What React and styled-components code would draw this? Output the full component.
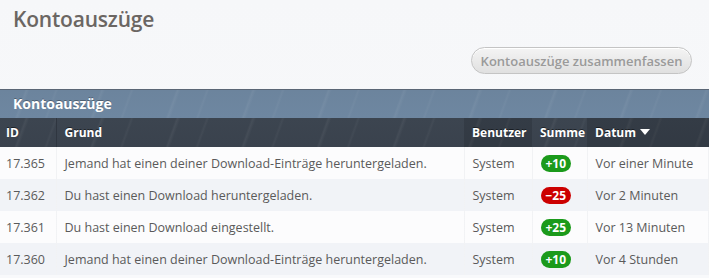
import React from "react";
import styled, { createGlobalStyle } from "styled-components";

const Global = createGlobalStyle`
  html, body { margin: 0; padding: 0; background: #f7f8fa; }
  body { font-family: "Open Sans", "DejaVu Sans", sans-serif; }
`;

const Page = styled.div`
  width: 709px;
  height: 278px;
  overflow: hidden;
  background: linear-gradient(180deg, #f6f7f9 0%, #f8f9fb 100%);
`;

const Title = styled.h1`
  margin: 0;
  padding: 5px 0 0 13px;
  height: 40px;
  box-sizing: border-box;
  font-size: 21px;
  font-weight: 600;
  color: #6b6663;
  letter-spacing: -0.2px;
`;

const ActionBar = styled.div`
  display: flex;
  justify-content: flex-end;
  padding: 7px 17px 0 0;
  height: 49px;
  box-sizing: border-box;
`;

const Button = styled.button`
  height: 27px;
  width: 221px;
  border: 1px solid #c4c4c4;
  border-radius: 14px;
  background: linear-gradient(180deg, #f4f4f4 0%, #e8e8e8 60%, #e0e0e0 100%);
  box-shadow: inset 0 1px 0 #fff;
  color: #9a9a9a;
  font-family: inherit;
  font-size: 13px;
  font-weight: 600;
  padding: 0;
`;

const Streaks = `
  repeating-linear-gradient(
    110deg,
    rgba(255,255,255,0) 0px,
    rgba(255,255,255,0) 23px,
    rgba(255,255,255,0.05) 25px,
    rgba(255,255,255,0) 28px,
    rgba(255,255,255,0) 51px,
    rgba(255,255,255,0.035) 53px,
    rgba(255,255,255,0) 55px,
    rgba(255,255,255,0) 71px
  )
`;

const Caption = styled.div`
  height: 29px;
  box-sizing: border-box;
  padding: 4px 0 0 13px;
  border-top: 1px solid #5a6675;
  background: ${Streaks}, linear-gradient(180deg, #6c849d 0%, #6e87a1 100%);
  color: #fff;
  font-size: 14px;
  font-weight: 700;
  text-shadow: 0 -1px 0 rgba(0,0,0,0.3);
`;

const Table = styled.table`
  width: 100%;
  border-collapse: collapse;
  table-layout: fixed;
  font-size: 12.5px;
`;

const Th = styled.th`
  height: 29px;
  padding: 0 0 0 ${p => p.$pad || 8}px;
  text-align: left;
  color: #fff;
  font-weight: 700;
  font-size: 12px;
  white-space: nowrap;
  text-shadow: 0 -1px 0 rgba(0,0,0,0.5);
  background: ${p => p.$dark ? "rgba(0,0,0,0.12)" : "transparent"};
  border-right: ${p => p.$divider ? "1px solid #2f3640" : "0"};
`;

const HeadRow = styled.tr`
  background: ${Streaks}, linear-gradient(180deg, #3c4550 0%, #3a424d 100%);
`;

const Row = styled.tr`
  background: ${p => (p.$alt ? "#f1f3f7" : "#fcfcfd")};
`;

const Td = styled.td`
  height: 32px;
  padding: 0 0 0 ${p => p.$pad || 8}px;
  color: #5a5a5a;
  white-space: nowrap;
  overflow: hidden;
  border-right: 1px solid rgba(0,0,0,0.025);
`;

const Badge = styled.span`
  display: inline-block;
  min-width: 30px;
  height: 17px;
  line-height: 17px;
  box-sizing: border-box;
  padding: 0 5px;
  border-radius: 9px;
  text-align: center;
  color: #fff;
  font-size: 12px;
  font-weight: 700;
  background: ${p => (p.$neg ? "#cc0000" : "#1b9a1b")};
`;

const SortArrow = styled.span`
  display: inline-block;
  margin-left: 4px;
  width: 0;
  height: 0;
  border-left: 5px solid transparent;
  border-right: 5px solid transparent;
  border-top: 6px solid #fff;
  vertical-align: 2px;
`;

const rows = [
  { id: "17.365", reason: "Jemand hat einen deiner Download-Einträge heruntergeladen.", user: "System", sum: "+10", date: "Vor einer Minute" },
  { id: "17.362", reason: "Du hast einen Download heruntergeladen.", user: "System", sum: "\u221225", neg: true, date: "Vor 2 Minuten" },
  { id: "17.361", reason: "Du hast einen Download eingestellt.", user: "System", sum: "+25", date: "Vor 13 Minuten" },
  { id: "17.360", reason: "Jemand hat einen deiner Download-Einträge heruntergeladen.", user: "System", sum: "+10", date: "Vor 4 Stunden" },
];

export default function App() {
  return (
    <Page>
      <Global />
      <Title>Kontoauszüge</Title>
      <ActionBar>
        <Button>Kontoauszüge zusammenfassen</Button>
      </ActionBar>
      <Caption>Kontoauszüge</Caption>
      <Table>
        <colgroup>
          <col style={{ width: 56 }} />
          <col style={{ width: 408 }} />
          <col style={{ width: 68 }} />
          <col style={{ width: 55 }} />
          <col />
        </colgroup>
        <thead>
          <HeadRow>
            <Th $pad={6} $divider>ID</Th>
            <Th>Grund</Th>
            <Th $dark>Benutzer</Th>
            <Th>Summe</Th>
            <Th $dark>Datum<SortArrow /></Th>
          </HeadRow>
        </thead>
        <tbody>
          {rows.map((r, i) => (
            <Row key={r.id} $alt={i % 2 === 1}>
              <Td $pad={6}>{r.id}</Td>
              <Td>{r.reason}</Td>
              <Td>{r.user}</Td>
              <Td><Badge $neg={r.neg}>{r.sum}</Badge></Td>
              <Td>{r.date}</Td>
            </Row>
          ))}
        </tbody>
      </Table>
    </Page>
  );
}
